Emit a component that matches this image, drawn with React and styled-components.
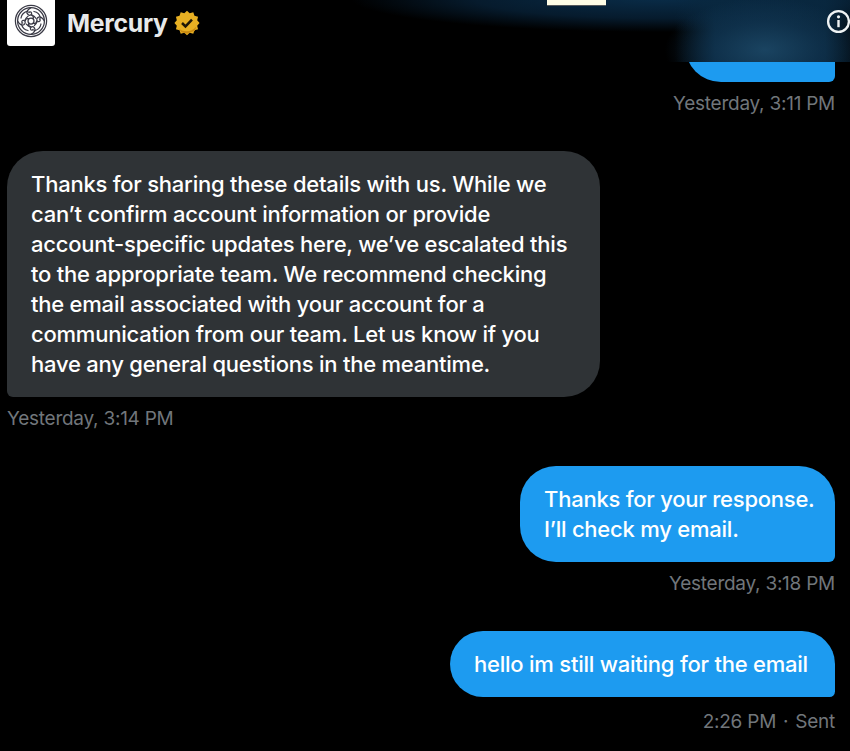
import React from "react";
import styled, { createGlobalStyle } from "styled-components";

const GlobalStyle = createGlobalStyle`
  html, body {
    margin: 0;
    padding: 0;
    background: #000;
    height: 100%;
    overflow: hidden;
  }
`;

const Page = styled.div`
  position: relative;
  width: 850px;
  height: 751px;
  overflow: hidden;
  background: #000;
  font-family: Inter, "Liberation Sans", sans-serif;
`;

const Header = styled.header`
  position: absolute;
  top: 0;
  left: 0;
  right: 0;
  height: 62px;
  overflow: hidden;
  display: flex;
  align-items: flex-start;
  gap: 12px;
  padding-left: 7px;
  box-sizing: border-box;
  background: #000;
`;

const Glow = styled.div`
  position: absolute;
  inset: 0;
  background:
    radial-gradient(ellipse 100px 52px at 765px 50px, rgba(32, 78, 110, 0.75), rgba(20, 58, 88, 0.5) 55%, transparent 100%),
    linear-gradient(90deg, transparent 675px, rgba(9, 40, 64, 0.9) 715px, rgba(9, 40, 64, 0.9) 825px, rgba(9, 40, 64, 0.4) 850px),
    radial-gradient(ellipse 310px 34px at 660px -2px, rgba(9, 44, 72, 1), rgba(8, 36, 60, 0.75) 60%, transparent 100%);
`;

const Note = styled.div`
  position: absolute;
  top: 0;
  left: 547px;
  width: 59px;
  height: 5px;
  background: #fffde6;
  border-bottom: 1px solid #55585a;
`;

const Logo = styled.div`
  position: relative;
  width: 48px;
  height: 46px;
  padding-bottom: 4px;
  box-sizing: border-box;
  background: #fff;
  border-radius: 0 0 3px 3px;
  display: flex;
  align-items: center;
  justify-content: center;
  flex-shrink: 0;
`;

const Name = styled.div`
  position: relative;
  display: flex;
  align-items: center;
  gap: 6px;
  height: 45px;
  color: #e7e9ea;
  font-size: 24.8px;
  font-weight: 700;
  letter-spacing: -0.3px;
`;

const InfoButton = styled.div`
  position: absolute;
  top: 9px;
  left: 826px;
  width: 28px;
  height: 28px;
`;

const Thread = styled.main`
  display: flex;
  flex-direction: column;
  padding: 0 15px 0 7px;
`;

const Row = styled.div`
  display: flex;
  flex-direction: column;
  align-items: ${(props) => (props.$mine ? "flex-end" : "flex-start")};
  margin-bottom: ${(props) => props.$gap || 0}px;
`;

const Bubble = styled.div`
  box-sizing: border-box;
  width: ${(props) => props.$width}px;
  height: ${(props) => props.$height}px;
  padding: 18px 24px;
  border-radius: ${(props) =>
    props.$mine ? "36px 36px 6px 36px" : "36px 36px 36px 6px"};
  background: ${(props) => (props.$mine ? "#1d9bf0" : "#2f3336")};
  color: #fff;
  font-size: 22px;
  font-weight: 450;
  line-height: 30px;
  letter-spacing: -0.23px;
  white-space: pre;
`;

const Stamp = styled.div`
  margin-top: ${(props) => props.$top || 10}px;
  height: 24px;
  line-height: 24px;
  color: #71767b;
  font-size: 19px;
  letter-spacing: -0.25px;
`;

const Dot = styled.span`
  margin: 0 7px;
`;

const App = () => {
  return (
    <>
      <GlobalStyle />
      <Page>
        <Thread>
          <Row $mine $gap={35}>
            <Bubble $mine $width={150} $height={82} />
            <Stamp>Yesterday, 3:11 PM</Stamp>
          </Row>
          <Row $gap={35}>
            <Bubble $width={593} $height={246}>
              {"Thanks for sharing these details with us. While we\ncan’t confirm account information or provide\naccount-specific updates here, we’ve escalated this\nto the appropriate team. We recommend checking\nthe email associated with your account for a\ncommunication from our team. Let us know if you\nhave any general questions in the meantime."}
            </Bubble>
            <Stamp>Yesterday, 3:14 PM</Stamp>
          </Row>
          <Row $mine $gap={35}>
            <Bubble $mine $width={315} $height={96}>
              {"Thanks for your response.\nI’ll check my email."}
            </Bubble>
            <Stamp>Yesterday, 3:18 PM</Stamp>
          </Row>
          <Row $mine>
            <Bubble $mine $width={385} $height={66}>
              hello im still waiting for the email
            </Bubble>
            <Stamp $top={13}>
              2:26 PM<Dot>·</Dot>Sent
            </Stamp>
          </Row>
        </Thread>
        <Header>
          <Glow />
          <Note />
          <Logo>
            <svg width="34" height="34" viewBox="0 0 34 34" fill="none" stroke="#3a3a46" strokeWidth="1.25" strokeLinecap="round">
              <circle cx="17" cy="17" r="15.6" />
              <circle cx="17" cy="17" r="13.4" />
              <circle cx="17" cy="17" r="3" />
              <circle cx="17" cy="17" r="5.6" strokeDasharray="5 3.800" />
              <path d="M17 3.600c-3.600 2-5 4.400-3.400 6.600 1.500 2 4.400.9 4-1.200-.3-1.500-2.400-1.600-2.800-.3" />
              <path d="M17 30.400c3.600-2 5-4.400 3.400-6.600-1.500-2-4.400-.9-4 1.200.3 1.500 2.400 1.600 2.800.3" />
              <path d="M3.600 17c2 3.600 4.400 5 6.600 3.400 2-1.500.9-4.400-1.200-4-1.500.3-1.600 2.400-.3 2.800" />
              <path d="M30.400 17c-2-3.600-4.400-5-6.600-3.400-2 1.500-.9 4.400 1.200 4 1.500-.3 1.600-2.400.3-2.800" />
              <path d="M20 7.500c3.600.6 5.800 2.800 6.500 6.500M27 20c-.6 3.400-3.200 6-7 6.800M14 26.500c-3.600-.6-5.800-2.800-6.500-6.500M7 14c.6-3.400 3.200-6 7-6.800" />
              <path d="M14.900 14.900c-1.800-.6-3.100-.2-3.900 1M19.100 14.900c.6-1.800.2-3.100-1-3.900M19.100 19.100c1.800.6 3.100.2 3.900-1M14.900 19.100c-.6 1.800-.2 3.100 1 3.900" />
            </svg>
          </Logo>
          <Name>
            Mercury
            <svg width="26" height="26" viewBox="0 0 24 24">
              <path
                fill="#e8b023"
                d="M12 .6l2.500 2.300 3.300-.9 1.100 3.200 3.300 1-.8 3.300 2.200 2.500-2.200 2.500.8 3.300-3.300 1-1.100 3.200-3.300-.9L12 23.400l-2.500-2.300-3.300.9-1.100-3.200-3.300-1 .8-3.300L.4 12l2.200-2.500-.8-3.300 3.300-1L6.200 2l3.300.9z"
              />
              <path fill="#c98a12" d="M4 16.500c3 3.600 11.500 5 16.500-1l-1.300 3.900-3.200 1L12 22 7 20.500z" />
              <path fill="none" stroke="#1d1606" strokeWidth="2.300" d="M7.400 12l3.200 3.200 6-6.300" />
            </svg>
          </Name>
          <InfoButton>
            <svg width="28" height="28" viewBox="0 0 28 28" fill="none">
              <circle cx="12.500" cy="12.500" r="10.400" stroke="#eff3f4" strokeWidth="2.300" />
              <circle cx="12.500" cy="7.800" r="1.600" fill="#eff3f4" />
              <rect x="11.300" y="11" width="2.400" height="7.200" fill="#eff3f4" />
            </svg>
          </InfoButton>
        </Header>
      </Page>
    </>
  );
};

export default App;
